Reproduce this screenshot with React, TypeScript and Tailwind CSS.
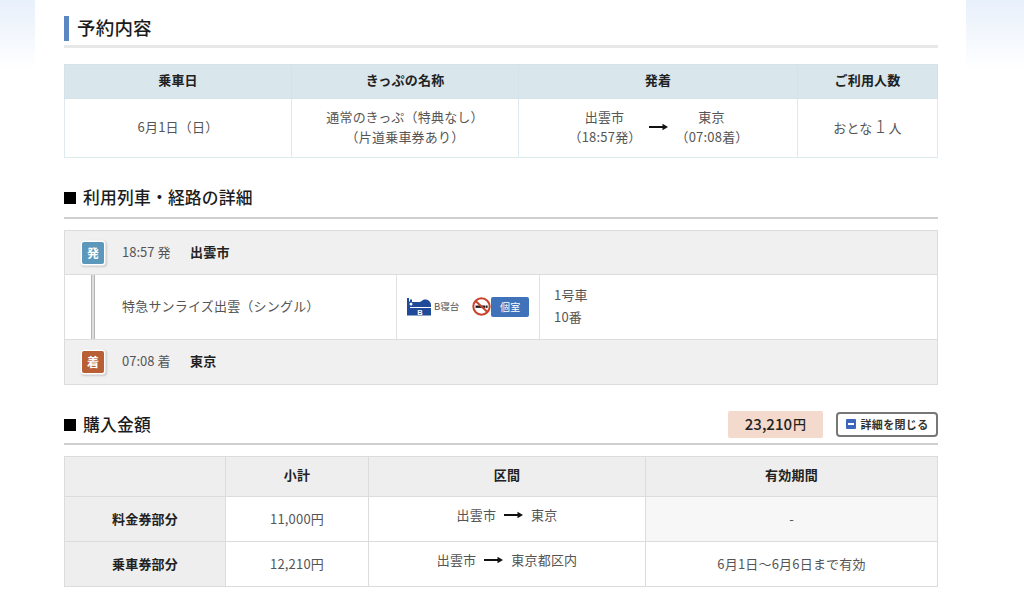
import React from "react";

const Arrow = ({ className = "" }: { className?: string }) => (
  <svg width="19" height="8" viewBox="0 0 19 8" className={className}>
    <path d="M0 3H13.5V0.8L19 4L13.5 7.2V5H0Z" fill="#111" />
  </svg>
);

const SectionHead = ({ title, className, children }: { title: string; className: string; children?: React.ReactNode }) => (
  <div className={`flex items-center justify-between border-b-2 border-[#d0d0d0] ${className}`}>
    <h2 className="flex items-center text-[16.8px] font-medium leading-none text-[#1c1c1c]">
      <span className="mr-[7px] mt-[3px] h-[12px] w-[12px] bg-black" />
      {title}
    </h2>
    {children}
  </div>
);

const BedIcon = () => (
  <svg width="24" height="18" viewBox="0 0 24 18">
    <path d="M0 0H2V3.5H3V1.5H5V4H12C15 4 15 1.5 18 1.5C21 1.5 24 3.5 24 7V17.5H0Z" fill="#1f4a99" />
    <circle cx="4" cy="6" r="1.5" fill="#fff" />
    <rect x="3" y="9" width="21" height="1" fill="#fff" />
    <text x="13" y="16.5" fontSize="7.5" fontWeight="700" fill="#fff" textAnchor="middle" fontFamily="Liberation Sans">B</text>
  </svg>
);

const NoSmoking = () => (
  <svg width="19" height="19" viewBox="0 0 19 19">
    <circle cx="9.5" cy="9.5" r="8.2" fill="#fff" stroke="#c8432a" strokeWidth="2" />
    <rect x="3.5" y="8.5" width="10" height="2.4" fill="#222" />
    <rect x="14" y="8.5" width="1.6" height="2.4" fill="#222" />
    <path d="M3.8 4.2L15.2 14.8" stroke="#c8432a" strokeWidth="2" />
  </svg>
);

const Badge = ({ label, color }: { label: string; color: string }) => (
  <span className={`flex h-[22px] w-[22px] items-center justify-center rounded-[2px] text-[12px] font-bold leading-none text-white shadow-[0_0_0_1.5px_#fff,1px_1px_2px_1.5px_rgba(0,0,0,0.15)] ${color}`}>
    {label}
  </span>
);

const Strip = ({ className }: { className: string }) => (
  <div className={`${className} h-[70px] shrink-0 bg-gradient-to-b from-[#e8f0fb] to-white`} />
);

export default function App() {
  return (
    <div
      className="flex h-[599px] overflow-hidden bg-white text-[13px] tracking-[0.015em] text-[#555]"
      style={{ fontFamily: '"Noto Sans CJK JP", "Noto Sans", sans-serif' }}
    >
      <Strip className="w-[35px]" />
      <main className="w-[931px] shrink-0 pl-[29px] pr-[28px] pt-[15px]">
        <div className="flex h-[33px] items-start border-b-[3px] border-[#e8e8e8]">
          <span className="mt-px h-[25px] w-[5px] bg-[#5b86c4]" />
          <h1 className="ml-[8px] text-[18.5px] font-medium leading-[25px] text-[#1c1c1c]">予約内容</h1>
        </div>

        <table className="mt-[16px] w-[873px] table-fixed border-collapse">
          <colgroup>
            <col className="w-[227px]" />
            <col className="w-[227px]" />
            <col className="w-[279px]" />
            <col className="w-[140px]" />
          </colgroup>
          <thead>
            <tr className="h-[34px] bg-[#d9e6ec] text-[#222]">
              {["乗車日", "きっぷの名称", "発着", "ご利用人数"].map((h) => (
                <th key={h} className="border border-[#d4e3ea] pb-[3px] font-bold">{h}</th>
              ))}
            </tr>
          </thead>
          <tbody>
            <tr className="h-[59px] text-center">
              <td className="border border-[#deeaf0] pb-[3px]">6月1日（日）</td>
              <td className="border border-[#deeaf0] pb-[2px] leading-[20px]">
                通常のきっぷ（特典なし）<br />（片道乗車券あり）
              </td>
              <td className="border border-[#deeaf0] pb-[3px]">
                <div className="flex items-center justify-center leading-[20px]">
                  <div className="w-[72px]">出雲市<br /><span className="whitespace-nowrap">（18:57発）</span></div>
                  <Arrow className="mx-[8px]" />
                  <div className="w-[72px]">東京<br /><span className="whitespace-nowrap">（07:08着）</span></div>
                </div>
              </td>
              <td className="border border-[#deeaf0] pb-[3px]">
                おとな <span className="text-[18px] font-light leading-none">1</span> 人
              </td>
            </tr>
          </tbody>
        </table>

        <div className="mt-[24px]">
          <SectionHead title="利用列車・経路の詳細" className="h-[37px] pb-[5px]" />
        </div>

        <div className="mt-[11px] w-[874px] border border-[#dcdcdc]">
          <div className="flex h-[43px] items-center bg-[#f0f0f0] pl-[17px]">
            <Badge label="発" color="bg-[#5b98bb]" />
            <span className="mb-[2px] ml-[18px] w-[68px] tracking-normal">18:57 発</span>
            <span className="mb-[2px] font-bold text-[#222]">出雲市</span>
          </div>
          <div className="flex h-[66px] border-y border-[#dcdcdc]">
            <div className="ml-[26px] h-full w-[4px] border-x border-[#b5b5b5] bg-[#dedede]" />
            <div className="flex w-[301px] shrink-0 items-center pb-[4px] pl-[27px] pr-0 leading-none">特急サンライズ出雲（シングル）</div>
            <div className="flex w-[144px] shrink-0 items-center border-x border-[#e2e2e2] pb-[1px] pl-[10px]">
              <BedIcon />
              <span className="ml-[3px] text-[9.5px] tracking-normal">B寝台</span>
              <span className="ml-[13px]"><NoSmoking /></span>
              <span className="flex h-[20px] w-[38px] items-center justify-center rounded-[2px] bg-[#3f72b8] text-[10px] text-white">個室</span>
            </div>
            <div className="flex flex-col justify-center pb-[3px] pl-[14px] leading-[22px]">
              <span>1号車</span>
              <span>10番</span>
            </div>
          </div>
          <div className="flex h-[44px] items-center bg-[#f0f0f0] pl-[17px]">
            <Badge label="着" color="bg-[#b95f36]" />
            <span className="mb-[2px] ml-[18px] w-[68px] tracking-normal">07:08 着</span>
            <span className="mb-[2px] font-bold text-[#222]">東京</span>
          </div>
        </div>

        <div className="mt-[20px]">
          <SectionHead title="購入金額" className="h-[40px]">
            <div className="flex items-center">
              <div className="flex h-[27px] w-[95px] items-center justify-center rounded-[2px] bg-[#f3dacd] font-medium text-[#222]">
                <span className="text-[15px] tracking-normal">23,210</span>
                <span className="ml-px text-[13px]">円</span>
              </div>
              <button className="ml-[13px] flex h-[25px] w-[102px] items-center justify-center rounded-[4px] border-2 border-[#777] bg-white text-[11px] font-bold tracking-[0.03em] text-[#333]">
                <span className="mr-[5px] flex h-[10px] w-[10px] items-center justify-center rounded-[1px] bg-[#3d66bd]">
                  <span className="h-[1.5px] w-[6px] bg-white" />
                </span>
                詳細を閉じる
              </button>
            </div>
          </SectionHead>
        </div>

        <table className="mt-[11px] w-[873px] table-fixed border-collapse">
          <colgroup>
            <col className="w-[161px]" />
            <col className="w-[143px]" />
            <col className="w-[277px]" />
            <col className="w-[292px]" />
          </colgroup>
          <thead>
            <tr className="h-[40px] bg-[#eeeeee] text-[#222]">
              <th className="border border-[#dcdcdc]" />
              <th className="border border-[#dcdcdc] pb-[3px] font-bold">小計</th>
              <th className="border border-[#dcdcdc] pb-[3px] font-bold">区間</th>
              <th className="border border-[#dcdcdc] pb-[3px] font-bold">有効期間</th>
            </tr>
          </thead>
          <tbody className="text-center">
            <tr className="h-[45px]">
              <th className="border border-[#dcdcdc] bg-[#eeeeee] pb-[1px] font-bold text-[#222]">料金券部分</th>
              <td className="border border-[#dcdcdc] pb-[1px]">11,000円</td>
              <td className="border border-[#dcdcdc]">
                <div className="mb-[8px] flex items-center justify-center">
                  出雲市<Arrow className="mx-[8px]" />東京
                </div>
              </td>
              <td className="border border-[#dcdcdc] bg-[#f7f7f7] pb-[1px]">-</td>
            </tr>
            <tr className="h-[45px]">
              <th className="border border-[#dcdcdc] bg-[#eeeeee] pb-[1px] font-bold text-[#222]">乗車券部分</th>
              <td className="border border-[#dcdcdc] pb-[1px]">12,210円</td>
              <td className="border border-[#dcdcdc]">
                <div className="mb-[8px] flex items-center justify-center">
                  出雲市<Arrow className="mx-[8px]" />東京都区内
                </div>
              </td>
              <td className="border border-[#dcdcdc] pb-[1px]">6月1日〜6月6日まで有効</td>
            </tr>
          </tbody>
        </table>
      </main>
      <Strip className="w-[58px]" />
    </div>
  );
}
